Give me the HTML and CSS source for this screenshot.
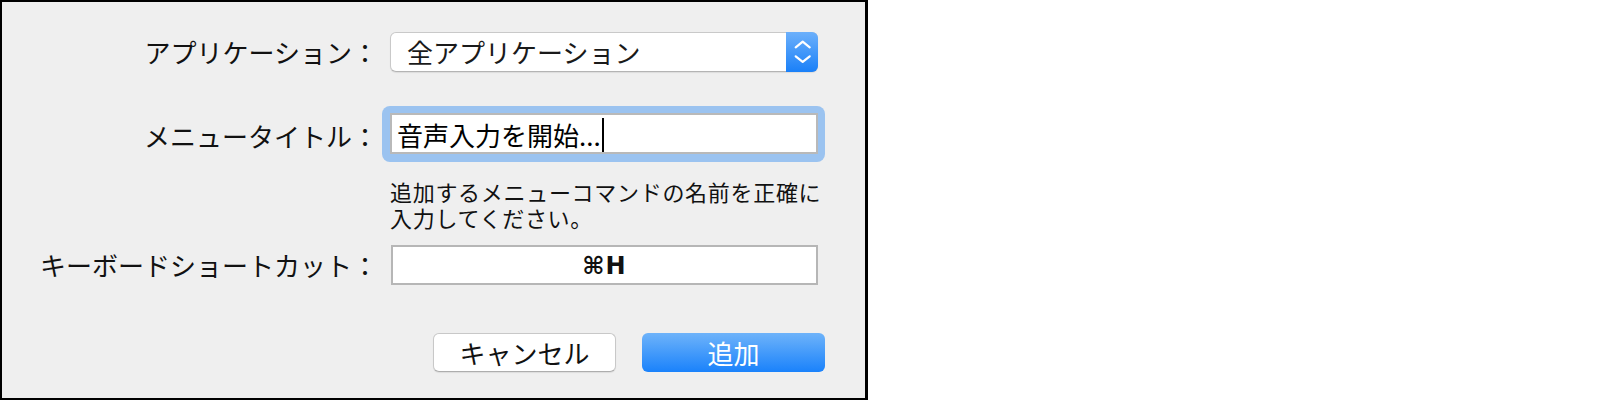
FILE: index.html
```html
<!DOCTYPE html>
<html lang="ja">
<head>
<meta charset="utf-8">
<title>メニューコマンドを追加</title>
<link rel="stylesheet" href="styles.css">
</head>
<body>
<div class="dialog">
  <div class="row">
    <div class="label">アプリケーション：</div>
    <div class="control popup">
      <span class="popup-text">全アプリケーション</span>
      <span class="popup-arrows">
        <svg width="32" height="40" viewBox="0 0 32 40">
          <polyline points="9.7,15.3 16.7,9.7 23.7,15.3" fill="none" stroke="#fff" stroke-width="2.2" stroke-linecap="round" stroke-linejoin="round"/>
          <polyline points="9.7,24.3 16.7,29.9 23.7,24.3" fill="none" stroke="#fff" stroke-width="2.2" stroke-linecap="round" stroke-linejoin="round"/>
        </svg>
      </span>
    </div>
  </div>

  <div class="row row-title">
    <div class="label label-title">メニュータイトル：</div>
    <div class="control">
      <div class="focus-ring">
        <div class="field field-title">音声入力を開始...<span class="caret"></span></div>
      </div>
    </div>
  </div>

  <div class="row row-help">
    <div class="label"></div>
    <div class="control help">
      <div class="help-line">追加するメニューコマンドの名前を正確に</div>
      <div class="help-line">入力してください。</div>
    </div>
  </div>

  <div class="row row-shortcut">
    <div class="label">キーボードショートカット：</div>
    <div class="control field field-shortcut">⌘H</div>
  </div>

  <div class="buttons">
    <div class="btn btn-cancel">キャンセル</div>
    <div class="btn btn-add">追加</div>
  </div>
</div>
</body>
</html>
```

FILE: styles.css
```css
html, body {
  margin: 0;
  padding: 0;
  background: #ffffff;
}

.dialog {
  box-sizing: border-box;
  width: 868px;
  height: 400px;
  border: 2px solid #000;
  border-right-width: 3px;
  background: #efefef;
  padding-top: 30px;
  font-family: "Noto Sans CJK JP", "Noto Sans", sans-serif;
  color: #000;
}

.row {
  display: flex;
  align-items: center;
}

.label {
  width: 376px;
  flex: none;
  text-align: right;
  font-size: 26px;
  line-height: 32px;
  color: #111;
}

.control {
  margin-left: 12px;
  width: 428px;
  flex: none;
  box-sizing: border-box;
}

/* popup button */
.popup {
  height: 40px;
  display: flex;
  align-items: center;
  background: #fff;
  border: 1px solid #c9c9c9;
  border-bottom-color: #b4b4b4;
  border-radius: 6px;
  box-shadow: 0 1px 1px rgba(0, 0, 0, 0.08);
}

.popup-text {
  flex: 1;
  padding-left: 16px;
  font-size: 26px;
  line-height: 32px;
  color: #1a1a1a;
}

.popup-arrows {
  width: 32px;
  height: 40px;
  margin: -1px -1px -1px 0;
  border-radius: 0 6px 6px 0;
  background: linear-gradient(#6cb0fb, #1a80f8);
  display: flex;
}

/* title field with focus ring */
.row-title {
  margin-top: 41px;
}

.label-title {
  padding-top: 5px;
}

.focus-ring {
  margin: -7px -7px -8px -8px;
  padding: 7px 7px 8px 8px;
  border-radius: 8px;
  background: #9bc3f0;
}

.field {
  box-sizing: border-box;
  background: #fff;
  border: 2px solid #bdbdbd;
  font-size: 26px;
  color: #000;
}

.field-title {
  height: 41px;
  padding: 3px 0 0 5px;
  line-height: 34px;
  display: flex;
  align-items: center;
  border-color: #b9b9b9;
}

.caret {
  display: inline-block;
  width: 2px;
  height: 34px;
  margin-left: 1px;
  margin-top: -1px;
  background: #000;
}

/* help text */
.row-help {
  margin-top: 24px;
  align-items: flex-start;
}

.help {
  font-size: 22px;
  letter-spacing: 0.7px;
  color: #111;
}

.help-line {
  height: 26px;
  line-height: 26px;
  white-space: nowrap;
}

/* shortcut field */
.row-shortcut {
  margin-top: 15px;
}

.field-shortcut {
  height: 40px;
  margin-left: 13px;
  width: 427px;
  display: flex;
  align-items: center;
  justify-content: center;
  font-family: "DejaVu Sans", sans-serif;
  font-size: 24px;
  line-height: 30px;
  font-weight: bold;
  letter-spacing: 1px;
  color: #111;
  border-color: #b6b6b6;
  padding-top: 1px;
}

/* buttons */
.buttons {
  display: flex;
  gap: 26px;
  margin: 48px 0 0 431px;
}

.btn {
  box-sizing: border-box;
  width: 183px;
  height: 39px;
  border-radius: 6px;
  display: flex;
  align-items: center;
  justify-content: center;
  font-size: 26px;
  line-height: 32px;
}

.btn-cancel {
  background: #fff;
  border: 1px solid #c8c8c8;
  border-bottom-color: #adadad;
  box-shadow: 0 1px 1px rgba(0, 0, 0, 0.08);
  color: #111;
}

.btn-add {
  background: linear-gradient(#6eb3fa, #1a82fb);
  color: #fff;
}
```
